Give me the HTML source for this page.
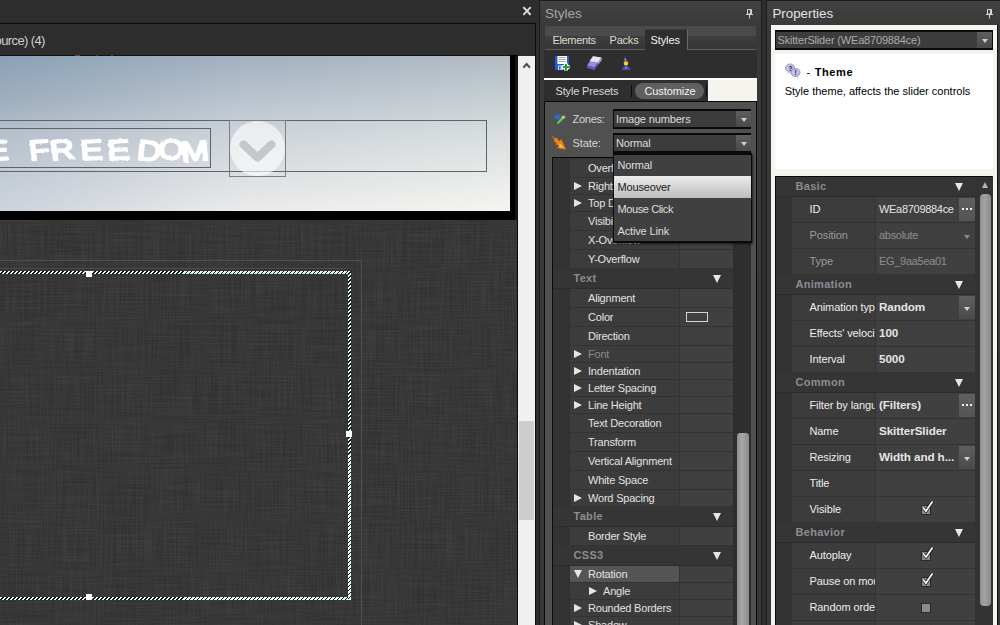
<!DOCTYPE html>
<html><head><meta charset="utf-8"><title>Styles and Properties</title>
<style>
*{box-sizing:border-box;margin:0;padding:0}
html,body{width:1000px;height:625px;overflow:hidden;background:#2d2d2d}
body{position:relative;font-family:"Liberation Sans",sans-serif;font-size:11px;color:#e0e0e0;}
.a{position:absolute}
.t{position:absolute;white-space:nowrap;line-height:14px;height:14px}
.b{font-weight:bold}
/* ---- left canvas ---- */
#canvas{left:0;top:220px;width:517px;height:405px;background:#2f2f2f;overflow:hidden}
.hatch{background:repeating-linear-gradient(135deg,#dffafa 0 2.05px,#151515 2.05px 2.83px);}
.handle{width:6px;height:6px;background:#fff}
/* ---- grids ---- */
.row{position:absolute;left:0;right:0;border-bottom:1px solid #333}
.sgrid .nm{position:absolute;left:16px;width:110px;top:0;bottom:0;background:#3c3c3c;border-left:1px solid #303030}
.sgrid .vl{position:absolute;left:126px;width:54px;top:0;bottom:0;background:#404040;border-left:1px solid #333}
.tri{position:absolute;width:0;height:0;border-style:solid}
.tr{border-width:4px 0 4px 8px;border-color:transparent transparent transparent #e6e6e6}
.td{border-width:8px 4px 0 4px;border-color:#e6e6e6 transparent transparent transparent}
.hd{color:#8c8c94;font-weight:bold;letter-spacing:.3px}
.pgrid .nm{position:absolute;left:15px;width:84px;top:0;bottom:0;background:#3c3c3c;border-left:1px solid #303030;overflow:hidden}
.pgrid .vl{position:absolute;left:99px;width:100px;top:0;bottom:0;background:#404040;border-left:1px solid #333}
.dd{position:absolute;background:linear-gradient(#5e5e5e,#4a4a4a);}
.dd i{position:absolute;left:50%;top:50%;margin:-1px 0 0 -3px;border-style:solid;border-width:4px 3px 0 3px;border-color:#d0d0d0 transparent transparent transparent}
.cb{position:absolute;width:10px;height:10px;background:#8a8a8a;border:1px solid #2a2a2a;left:45px;top:8px}
</style></head><body>
<!-- left document panel -->
<div class="a" style="left:0;top:0;width:536px;height:23px;background:#2d2d2d"></div>
<svg class="a" style="left:522px;top:6px" width="10" height="10" viewBox="0 0 10 10"><path d="M2 1.800 L8 8.200 M8 1.800 L2 8.200" stroke="#d6d6d6" stroke-width="2" stroke-linecap="square"/></svg>
<div class="a" style="left:0;top:23px;width:536px;height:1px;background:#0a0a0a"></div>
<div class="a" style="left:535px;top:23px;width:1px;height:602px;background:#0a0a0a"></div>
<div class="t" style="left:-5.500px;top:32.500px;font-size:13px;color:#cfcfcf;letter-spacing:-0.6px;line-height:15px;height:15px">ource) (4)</div>
<div class="a" style="left:0;top:55px;width:518px;height:165px;background:#000"></div>
<div class="a" style="left:515px;top:56px;width:3px;height:164px;background:#141414"></div>
<div class="a" style="left:0;top:55px;width:510px;height:1px;background:linear-gradient(90deg,#161208 0 75px,#8e400e 75px 80px,#161208 80px 96px,#6a3410 96px 98px,#161208 98px 111px,#7a3a0e 111px 113px,#161208 113px 100%)"></div>
<!-- sky image -->
<div class="a" id="sky" style="left:0;top:56px;width:510px;height:155px;overflow:hidden;background:linear-gradient(180deg,rgb(138,162,183) 0%,rgb(158,174,190) 28%,rgb(182,192,204) 50%,rgb(205,212,220) 100%)">
 <div class="a" style="inset:0;background:linear-gradient(180deg,rgb(163,177,193) 0%,rgb(205,211,217) 50%,rgb(235,235,235) 100%);-webkit-mask-image:linear-gradient(90deg,transparent 0,#000 250px,#000 510px);mask-image:linear-gradient(90deg,transparent 0,#000 250px,#000 510px)"></div>
 <div class="a" style="inset:0;background:linear-gradient(180deg,rgb(178,188,196) 0%,rgb(216,222,223) 50%,rgb(244,245,240) 100%);-webkit-mask-image:linear-gradient(90deg,transparent 250px,#000 510px);mask-image:linear-gradient(90deg,transparent 250px,#000 510px)"></div>
 <div class="a" style="left:-1px;top:64px;width:488px;height:52px;border:1px solid #5e6468"></div>
 <div class="a" style="left:-1px;top:72px;width:212px;height:40px;border:1px solid #5e6468"></div>
 <div class="a" style="left:229px;top:64px;width:57px;height:57px;border:1px solid #7a8084"></div>
 <div class="a" style="left:230px;top:65px;width:55px;height:55px;border-radius:50%;background:rgba(255,255,255,.62)"></div>
 <svg class="a" style="left:237px;top:79px" width="42" height="30" viewBox="0 0 42 30"><path d="M6.500 9.500 L20.500 22.500 L34.500 9.500" fill="none" stroke="#c3c8cc" stroke-width="8" stroke-linecap="round" stroke-linejoin="round"/></svg>
 <svg class="a" style="left:0;top:70px" width="214" height="46" viewBox="0 0 214 46">
  <defs><filter id="rough" x="-5%" y="-20%" width="110%" height="140%"><feTurbulence type="fractalNoise" baseFrequency="0.28" numOctaves="2" seed="7" result="n"/><feDisplacementMap in="SourceGraphic" in2="n" scale="2.600"/></filter></defs>
  <g filter="url(#rough)" fill="#fff" stroke="#fff" stroke-width="2" stroke-linejoin="round" font-family="'Liberation Sans',sans-serif" font-size="28">
   <text transform="translate(-14 34.500) scale(1.25 1) rotate(-3)">E</text>
   <text transform="translate(30 34.500) scale(1.2 1)" x="0 18 42.500 65 88.500 106.500 126.500" y="0 0 -0.500 -0.500 -1 -2 1" rotate="-5 -7 -3 -3 5 3 -4">FREEDOM</text>
  </g>
 </svg>
</div>
<!-- editor canvas -->
<div class="a" id="canvas"><svg width="517" height="406" style="display:block">
 <defs>
  <filter id="lv" x="0" y="0" width="100%" height="100%"><feTurbulence type="fractalNoise" baseFrequency="0.85 0.02" numOctaves="2" seed="5"/><feColorMatrix type="matrix" values="0 0 0 0 1  0 0 0 0 1  0 0 0 0 1  0.085 0 0 0 -0.022"/></filter>
  <filter id="lh" x="0" y="0" width="100%" height="100%"><feTurbulence type="fractalNoise" baseFrequency="0.02 0.85" numOctaves="2" seed="11"/><feColorMatrix type="matrix" values="0 0 0 0 1  0 0 0 0 1  0 0 0 0 1  0.085 0 0 0 -0.022"/></filter>
 </defs>
 <rect width="517" height="406" filter="url(#lv)"/><rect width="517" height="406" filter="url(#lh)"/>
</svg></div>
<div class="a" style="left:517px;top:220px;width:1px;height:405px;background:#0a0a0a"></div>
<div class="a" style="left:0;top:260px;width:362px;height:1px;background:#4f4f4f"></div>
<div class="a" style="left:361px;top:260px;width:1px;height:365px;background:#4f4f4f"></div>
<div class="a" style="left:0;top:268px;width:348px;height:1px;background:#4a4a4a"></div>
<div class="a hatch" style="left:0;top:271px;width:351px;height:3px"></div>
<div class="a hatch" style="left:0;top:597px;width:351px;height:3px"></div>
<div class="a hatch" style="left:348px;top:271px;width:3px;height:329px"></div>
<div class="a handle" style="left:86px;top:271px"></div>
<div class="a handle" style="left:346px;top:431px"></div>
<div class="a handle" style="left:86px;top:594px"></div>
<!-- vertical scrollbar -->
<div class="a" style="left:518px;top:56px;width:17px;height:569px;background:#f0f0f0"></div>
<svg class="a" style="left:522px;top:60px" width="10" height="10" viewBox="0 0 10 10"><path d="M1.300 7.600 L4.600 4 L7.900 7.600" fill="none" stroke="#4a4a4a" stroke-width="2"/></svg>
<div class="a" style="left:519px;top:421px;width:15px;height:99px;background:#cdcdcd"></div>
<!-- Styles panel -->
<div class="a" style="left:539px;top:0;width:223px;height:625px;background:linear-gradient(#424242 0,#393939 26px,#383838 100%);border:1px solid #1c1c1c;border-bottom:0"></div>
<div class="t" style="left:545px;top:6px;font-size:13.5px;color:#a6a6a6;line-height:16px;height:16px">Styles</div>
<svg class="a" style="left:746px;top:9px" width="7" height="10" viewBox="0 0 7 10"><path d="M1.500 0.500h4v4.500h-4z M0 5.500h7 M3.500 5.500v4" fill="none" stroke="#d0d0d0" stroke-width="1"/><path d="M4.500 1v4" stroke="#d0d0d0" stroke-width="1"/></svg>
<div class="a" style="left:545px;top:26px;width:211px;height:24px;background:linear-gradient(#4b4b4b 0,#4b4b4b 10px,#3e3e3e 10px,#363636 23px);border-bottom:1px solid #5c5c5c"></div>
<div class="a" style="left:645px;top:29px;width:43px;height:21px;background:#2e2e2e;border-right:1px solid #6a6a6a;border-top:1px solid #3a3a3a"></div>
<div class="t" style="left:552.5px;top:33px;color:#dcdccf;letter-spacing:-.35px">Elements</div>
<div class="t" style="left:609.5px;top:33px;color:#dcdccf;letter-spacing:-.2px">Packs</div>
<div class="t" style="left:650.5px;top:33px;color:#f4f4f4;letter-spacing:-.1px">Styles</div>
<div class="a" style="left:544px;top:50px;width:213px;height:28px;background:#2e2e2e"></div>
<svg class="a" style="left:555px;top:56px" width="15" height="15" viewBox="0 0 15 15">
 <rect x="0" y="0" width="14" height="14" rx="1" fill="#1c5fd2"/><rect x="2.500" y="0" width="9.500" height="8" fill="#fbfbfb"/>
 <path d="M4 1.500h6.500M4 3.500h6.500M4 5.500h6.500" stroke="#9a9a9a" stroke-width=".9"/><rect x="3" y="9.5" width="5" height="4.5" fill="#cfd8ea"/><rect x="4" y="10.5" width="1.5" height="3" fill="#1c5fd2"/>
 <path d="M11 7.5v7M7.5 11h7" stroke="#fff" stroke-width="4"/><path d="M11 8v6M8 11h6" stroke="#18a818" stroke-width="2"/></svg>
<svg class="a" style="left:586px;top:56px" width="17" height="15" viewBox="0 0 17 15">
 <path d="M7 0.300 L15.400 1.400 L8.500 11.500 L1.100 9.600 Z" fill="#8e8ef2"/><path d="M7 0.300 L15.400 1.400 L12.100 6.400 L3.700 5 Z" fill="#e6e6e6"/><path d="M1.100 9.600 L8.500 11.500 L15.400 1.400 L15.800 3.700 L8.300 14 L1.100 12 Z" fill="#6060b4"/><path d="M12.100 6.400 L15.400 1.400 L15.800 3.700 L12.400 8.400 Z" fill="#a8a8a8"/></svg>
<svg class="a" style="left:621px;top:55px" width="11" height="16" viewBox="0 0 11 16">
 <path d="M3.500 1 L7.500 8 L2.500 8 Z" fill="#4a4ab8"/><circle cx="5" cy="8.500" r="2.200" fill="#f4d020"/><path d="M1 15 Q1.500 10.500 5 10.500 Q8.500 10.500 9.500 15 Z" fill="#4a4ab8"/><circle cx="4.500" cy="4.500" r=".7" fill="#f4e040"/><circle cx="5" cy="13" r=".7" fill="#f4e040"/></svg>
<div class="a" style="left:544px;top:78px;width:213px;height:23px;background:#f6f4ef"></div>
<div class="a" style="left:544px;top:78px;width:213px;height:2px;background:#fff"></div>
<div class="a" style="left:544px;top:80px;width:164px;height:21px;background:#2e2e2e"></div>
<div class="t" style="left:555.5px;top:84px;color:#d8d8d8;letter-spacing:-.15px">Style Presets</div>
<div class="a" style="left:631px;top:85px;width:1px;height:12px;background:#0c0c0c"></div>
<div class="a" style="left:635px;top:83px;width:69px;height:16px;border-radius:8px;background:#606060"></div>
<div class="t" style="left:644.5px;top:84px;color:#f2f2f2;letter-spacing:-.1px">Customize</div>
<div class="a" style="left:706px;top:85px;width:1px;height:12px;background:#0c0c0c"></div>
<!-- form -->
<div class="a" style="left:544px;top:101px;width:213px;height:524px;background:#505050;border:1px solid #0a0a0a;border-bottom:0"></div>
<svg class="a" style="left:554px;top:114px" width="13" height="11" viewBox="0 0 13 11"><path d="M0.500 1 L7 0.500 L5 5.500 L1 5 Z" fill="#2a6ae0"/><path d="M9.500 1 L12 2.500 L5 9.500 L2.800 10.300 L3.500 8 Z" fill="#58d040"/><path d="M9.500 1 L12 2.500 L10.800 3.700 L8.300 2.200 Z" fill="#e06a20"/><path d="M8.300 2.200 L10.800 3.700 L10 4.500 L7.500 3 Z" fill="#f4f4f4"/></svg>
<div class="t" style="left:572.5px;top:112px;color:#d6d6d6;letter-spacing:-.25px">Zones:</div>
<svg class="a" style="left:551px;top:135px" width="16" height="15" viewBox="0 0 16 15"><path d="M0.500 0.500 L4 3.500 L5.500 2.500 L8 6 L10.500 4.500 L15 14.500 L6 13 L8 10.500 L4.500 9.500 L5.500 7.500 L2.500 6.500 L3.500 5 Z" fill="#f08010"/><path d="M8.500 8 L13 13 L8.500 12 Z" fill="#ffc840"/></svg>
<div class="t" style="left:572.5px;top:136px;color:#d6d6d6;letter-spacing:-.1px">State:</div>
<div class="a" style="left:613px;top:109px;width:138px;height:20px;background:#3c3c3c;border:1px solid #0a0a0a;border-top-width:2px;border-bottom-width:2px"></div>
<div class="dd" style="left:736px;top:111px;width:15px;height:16px"><i></i></div>
<div class="t" style="left:616px;top:112px;color:#dcdcdc;letter-spacing:-.15px">Image numbers</div>
<div class="a" style="left:613px;top:133px;width:138px;height:20px;background:#3c3c3c;border:1px solid #0a0a0a;border-top-width:2px;border-bottom-width:2px"></div>
<div class="dd" style="left:736px;top:135px;width:15px;height:16px"><i></i></div>
<div class="t" style="left:616px;top:136px;color:#dcdcdc;letter-spacing:-.15px">Normal</div>
<div class="a sgrid" style="left:552px;top:157px;width:199px;height:468px;background:#333;border-left:1px solid #0a0a0a;border-top:1px solid #0a0a0a;overflow:hidden">
<div class="row" style="top:1px;height:19px;width:180px"><div class="nm"></div><div class="vl"></div><span class="t" style="left:35px;top:2px;color:#e2e2e2;letter-spacing:-.2px">Overflow</span></div>
<div class="row" style="top:20px;height:17px;width:180px"><div class="nm"></div><div class="vl"></div><i class="tri tr" style="left:21px;top:4px"></i><span class="t" style="left:35px;top:1px;color:#e2e2e2;letter-spacing:-.2px">Right Distance</span></div>
<div class="row" style="top:37px;height:17px;width:180px"><div class="nm"></div><div class="vl"></div><i class="tri tr" style="left:21px;top:4px"></i><span class="t" style="left:35px;top:1px;color:#e2e2e2;letter-spacing:-.2px">Top Distance</span></div>
<div class="row" style="top:54px;height:19px;width:180px"><div class="nm"></div><div class="vl"></div><span class="t" style="left:35px;top:2px;color:#e2e2e2;letter-spacing:-.2px">Visibility</span></div>
<div class="row" style="top:73px;height:19px;width:180px"><div class="nm"></div><div class="vl"></div><span class="t" style="left:35px;top:2px;color:#e2e2e2;letter-spacing:-.2px">X-Overflow</span></div>
<div class="row" style="top:92px;height:19px;width:180px"><div class="nm"></div><div class="vl"></div><span class="t" style="left:35px;top:2px;color:#e2e2e2;letter-spacing:-.2px">Y-Overflow</span></div>
<div class="row" style="top:111px;height:20px;width:180px;background:#353535;border-bottom-color:#2c2c2c"><span class="t hd" style="left:20.500px;top:2px">Text</span><i class="tri td" style="left:160px;top:6px"></i></div>
<div class="row" style="top:131px;height:19px;width:180px"><div class="nm"></div><div class="vl"></div><span class="t" style="left:35px;top:2px;color:#e2e2e2;letter-spacing:-.2px">Alignment</span></div>
<div class="row" style="top:150px;height:19px;width:180px"><div class="nm"></div><div class="vl"></div><span class="t" style="left:35px;top:2px;color:#e2e2e2;letter-spacing:-.2px">Color</span><span class="a" style="left:133px;top:4px;width:22px;height:10px;border:1px solid #d4d4d4"></span></div>
<div class="row" style="top:169px;height:19px;width:180px"><div class="nm"></div><div class="vl"></div><span class="t" style="left:35px;top:2px;color:#e2e2e2;letter-spacing:-.2px">Direction</span></div>
<div class="row" style="top:188px;height:17px;width:180px"><div class="nm"></div><div class="vl"></div><i class="tri tr" style="left:21px;top:4px"></i><span class="t" style="left:35px;top:1px;color:#8a8a8a;letter-spacing:-.2px">Font</span></div>
<div class="row" style="top:205px;height:17px;width:180px"><div class="nm"></div><div class="vl"></div><i class="tri tr" style="left:21px;top:4px"></i><span class="t" style="left:35px;top:1px;color:#e2e2e2;letter-spacing:-.2px">Indentation</span></div>
<div class="row" style="top:222px;height:17px;width:180px"><div class="nm"></div><div class="vl"></div><i class="tri tr" style="left:21px;top:4px"></i><span class="t" style="left:35px;top:1px;color:#e2e2e2;letter-spacing:-.2px">Letter Spacing</span></div>
<div class="row" style="top:239px;height:17px;width:180px"><div class="nm"></div><div class="vl"></div><i class="tri tr" style="left:21px;top:4px"></i><span class="t" style="left:35px;top:1px;color:#e2e2e2;letter-spacing:-.2px">Line Height</span></div>
<div class="row" style="top:256px;height:19px;width:180px"><div class="nm"></div><div class="vl"></div><span class="t" style="left:35px;top:2px;color:#e2e2e2;letter-spacing:-.2px">Text Decoration</span></div>
<div class="row" style="top:275px;height:19px;width:180px"><div class="nm"></div><div class="vl"></div><span class="t" style="left:35px;top:2px;color:#e2e2e2;letter-spacing:-.2px">Transform</span></div>
<div class="row" style="top:294px;height:19px;width:180px"><div class="nm"></div><div class="vl"></div><span class="t" style="left:35px;top:2px;color:#e2e2e2;letter-spacing:-.2px">Vertical Alignment</span></div>
<div class="row" style="top:313px;height:19px;width:180px"><div class="nm"></div><div class="vl"></div><span class="t" style="left:35px;top:2px;color:#e2e2e2;letter-spacing:-.2px">White Space</span></div>
<div class="row" style="top:332px;height:17px;width:180px"><div class="nm"></div><div class="vl"></div><i class="tri tr" style="left:21px;top:4px"></i><span class="t" style="left:35px;top:1px;color:#e2e2e2;letter-spacing:-.2px">Word Spacing</span></div>
<div class="row" style="top:349px;height:20px;width:180px;background:#353535;border-bottom-color:#2c2c2c"><span class="t hd" style="left:20.500px;top:2px">Table</span><i class="tri td" style="left:160px;top:6px"></i></div>
<div class="row" style="top:369px;height:19px;width:180px"><div class="nm"></div><div class="vl"></div><span class="t" style="left:35px;top:2px;color:#e2e2e2;letter-spacing:-.2px">Border Style</span></div>
<div class="row" style="top:388px;height:20px;width:180px;background:#353535;border-bottom-color:#2c2c2c"><span class="t hd" style="left:20.500px;top:2px">CSS3</span><i class="tri td" style="left:160px;top:6px"></i></div>
<div class="row" style="top:408px;height:17px;width:180px"><div class="nm" style="background:#555"></div><div class="vl"></div><i class="tri td" style="left:21px;top:4px"></i><span class="t" style="left:35px;top:1px;color:#e2e2e2;letter-spacing:-.2px">Rotation</span></div>
<div class="row" style="top:425px;height:17px;width:180px"><div class="nm"></div><div class="vl"></div><i class="tri tr" style="left:36px;top:4px"></i><span class="t" style="left:50px;top:1px;color:#e2e2e2;letter-spacing:-.2px">Angle</span></div>
<div class="row" style="top:442px;height:17px;width:180px"><div class="nm"></div><div class="vl"></div><i class="tri tr" style="left:21px;top:4px"></i><span class="t" style="left:35px;top:1px;color:#e2e2e2;letter-spacing:-.2px">Rounded Borders</span></div>
<div class="row" style="top:459px;height:17px;width:180px"><div class="nm"></div><div class="vl"></div><i class="tri tr" style="left:21px;top:4px"></i><span class="t" style="left:35px;top:1px;color:#e2e2e2;letter-spacing:-.2px">Shadow</span></div>
<div class="a" style="left:180px;top:0;width:19px;height:468px;background:#2e2e2e"></div>
<div class="a" style="left:184px;top:275px;width:12px;height:200px;border-radius:3px;background:linear-gradient(90deg,#8e8e8e,#a8a8a8 40%,#8a8a8a)"></div>
</div>
<div class="a" style="left:613px;top:153px;width:139px;height:90px;background:#404040;border:1px solid #0a0a0a;border-top-width:2px;border-bottom-width:2px;box-shadow:1px 1px 2px rgba(0,0,0,.6)"></div>
<div class="a" style="left:614px;top:176px;width:137px;height:22px;background:linear-gradient(#ececec,#bdbdbd)"></div>
<div class="t" style="left:617.5px;top:158px;color:#dedede;letter-spacing:-.15px">Normal</div>
<div class="t" style="left:617.5px;top:180px;color:#1a1a1a;letter-spacing:-.15px">Mouseover</div>
<div class="t" style="left:617.5px;top:202px;color:#dedede;letter-spacing:-.4px">Mouse Click</div>
<div class="t" style="left:617.5px;top:224px;color:#dedede;letter-spacing:-.15px">Active Link</div>
<!-- Properties panel -->
<div class="a" style="left:766px;top:0;width:236px;height:625px;background:linear-gradient(#424242 0,#393939 26px,#383838 100%);border:1px solid #1c1c1c;border-bottom:0"></div>
<div class="t" style="left:772.5px;top:6px;font-size:13.3px;color:#e2e2e2;line-height:16px;height:16px">Properties</div>
<svg class="a" style="left:986px;top:9px" width="7" height="10" viewBox="0 0 7 10"><path d="M1.500 0.500h4v4.500h-4z M0 5.500h7 M3.500 5.500v4" fill="none" stroke="#d8d8d8" stroke-width="1"/><path d="M4.500 1v4" stroke="#d8d8d8" stroke-width="1"/></svg>
<div class="a" style="left:771px;top:25px;width:226px;height:600px;background:#f6f4ef"></div>
<div class="a" style="left:997px;top:25px;width:1px;height:600px;background:#111"></div>
<div class="a" style="left:775px;top:30px;width:218px;height:20px;background:#3c3c3c;border:1px solid #0a0a0a;border-top-width:2px;border-bottom-width:2px"></div>
<div class="dd" style="left:977px;top:32px;width:15px;height:16px"><i></i></div>
<div class="t" style="left:777.5px;top:33px;color:#ababab;letter-spacing:-.18px">SkitterSlider (WEa8709884ce)</div>
<div class="a" style="left:775px;top:54px;width:218px;height:115px;background:#fff"></div>
<svg class="a" style="left:785px;top:63px" width="16" height="16" viewBox="0 0 16 16"><ellipse cx="5" cy="5" rx="4.500" ry="4" fill="#c4c4ee" stroke="#8888b8" stroke-width=".8"/><path d="M3 8.500 L2.500 11 L5.500 8.800Z" fill="#c4c4ee"/><ellipse cx="10.500" cy="9.500" rx="4.500" ry="4" fill="#c4c4ee" stroke="#7e7eaa" stroke-width=".8"/><path d="M11 13 L13 15.500 L13 12.500Z" fill="#b0b0d8"/><text x="3.200" y="7.500" font-size="7" font-weight="bold" fill="#222" font-family="Liberation Sans,sans-serif">?</text><text x="9.500" y="12" font-size="7" font-weight="bold" fill="#222" font-family="Liberation Sans,sans-serif">!</text></svg>
<div class="t" style="left:806.500px;top:64.700px;color:#000">- <b style="margin-left:1.500px;letter-spacing:.6px">Theme</b></div>
<div class="t" style="left:784.700px;top:83.700px;color:#000">Style theme, affects the slider controls</div>
<div class="a pgrid" style="left:775px;top:176px;width:218px;height:449px;background:#333;border:1px solid #0a0a0a;border-bottom:0;border-right-color:#333;overflow:hidden">
<div class="row" style="top:0px;height:20px;width:199px;background:#353535;border-bottom-color:#2c2c2c"><span class="t hd" style="left:19.500px;top:2px">Basic</span><i class="tri td" style="left:178.500px;top:6px"></i></div>
<div class="row" style="top:20px;height:26px;width:199px"><div class="nm"><span class="t" style="left:17.500px;top:5px;color:#ececec;letter-spacing:-.1px">ID</span></div><div class="vl"><span class="t" style="left:3px;top:5px;color:#e4e4e4;letter-spacing:-.3px">WEa8709884ce</span></div><span class="a" style="left:183px;top:1px;width:16px;height:23px;background:linear-gradient(#606060,#545454)"></span><span class="a" style="left:186px;top:11px;width:2px;height:2px;background:#f0f0f0;box-shadow:4px 0 #f0f0f0,8px 0 #f0f0f0"></span></div>
<div class="row" style="top:46px;height:26px;width:199px"><div class="nm"><span class="t" style="left:17.500px;top:5px;color:#9a9a9a;letter-spacing:-.1px">Position</span></div><div class="vl"><span class="t" style="left:3px;top:5px;color:#8e8e8e;letter-spacing:-.3px">absolute</span></div><span class="dd" style="left:183px;top:1px;width:16px;height:23px;background:none"><i style="border-top-color:#8a8a8a"></i></span></div>
<div class="row" style="top:72px;height:26px;width:199px"><div class="nm"><span class="t" style="left:17.500px;top:5px;color:#9a9a9a;letter-spacing:-.1px">Type</span></div><div class="vl"><span class="t" style="left:3px;top:5px;color:#8e8e8e;letter-spacing:-.3px">EG_9aa5ea01</span></div></div>
<div class="row" style="top:98px;height:20px;width:199px;background:#353535;border-bottom-color:#2c2c2c"><span class="t hd" style="left:19.500px;top:2px">Animation</span><i class="tri td" style="left:178.500px;top:6px"></i></div>
<div class="row" style="top:118px;height:26px;width:199px"><div class="nm"><span class="t" style="left:17.500px;top:5px;color:#ececec;letter-spacing:-.1px">Animation type</span></div><div class="vl"><span class="t b" style="left:3px;top:5px;color:#e4e4e4;font-size:11.700px;letter-spacing:-.1px">Random</span></div><span class="dd" style="left:183px;top:1px;width:16px;height:23px"><i></i></span></div>
<div class="row" style="top:144px;height:26px;width:199px"><div class="nm"><span class="t" style="left:17.500px;top:5px;color:#ececec;letter-spacing:-.1px">Effects' velocity</span></div><div class="vl"><span class="t b" style="left:3px;top:5px;color:#e4e4e4;font-size:11.700px;letter-spacing:-.1px">100</span></div></div>
<div class="row" style="top:170px;height:26px;width:199px"><div class="nm"><span class="t" style="left:17.500px;top:5px;color:#ececec;letter-spacing:-.1px">Interval</span></div><div class="vl"><span class="t b" style="left:3px;top:5px;color:#e4e4e4;font-size:11.700px;letter-spacing:-.1px">5000</span></div></div>
<div class="row" style="top:196px;height:20px;width:199px;background:#353535;border-bottom-color:#2c2c2c"><span class="t hd" style="left:19.500px;top:2px">Common</span><i class="tri td" style="left:178.500px;top:6px"></i></div>
<div class="row" style="top:216px;height:26px;width:199px"><div class="nm"><span class="t" style="left:17.500px;top:5px;color:#ececec;letter-spacing:-.1px">Filter by language</span></div><div class="vl"><span class="t b" style="left:3px;top:5px;color:#e4e4e4;font-size:11.700px;letter-spacing:-.1px">(Filters)</span></div><span class="a" style="left:183px;top:1px;width:16px;height:23px;background:linear-gradient(#606060,#545454)"></span><span class="a" style="left:186px;top:11px;width:2px;height:2px;background:#f0f0f0;box-shadow:4px 0 #f0f0f0,8px 0 #f0f0f0"></span></div>
<div class="row" style="top:242px;height:26px;width:199px"><div class="nm"><span class="t" style="left:17.500px;top:5px;color:#ececec;letter-spacing:-.1px">Name</span></div><div class="vl"><span class="t b" style="left:3px;top:5px;color:#e4e4e4;font-size:11.700px;letter-spacing:-.1px">SkitterSlider</span></div></div>
<div class="row" style="top:268px;height:26px;width:199px"><div class="nm"><span class="t" style="left:17.500px;top:5px;color:#ececec;letter-spacing:-.1px">Resizing</span></div><div class="vl"><span class="t b" style="left:3px;top:5px;color:#e4e4e4;font-size:11.700px;letter-spacing:-.1px">Width and h...</span></div><span class="dd" style="left:183px;top:1px;width:16px;height:23px"><i></i></span></div>
<div class="row" style="top:294px;height:26px;width:199px"><div class="nm"><span class="t" style="left:17.500px;top:5px;color:#ececec;letter-spacing:-.1px">Title</span></div><div class="vl"><span class="t" style="left:3px;top:5px;color:#e4e4e4;letter-spacing:-.3px"></span></div></div>
<div class="row" style="top:320px;height:26px;width:199px"><div class="nm"><span class="t" style="left:17.500px;top:5px;color:#ececec;letter-spacing:-.1px">Visible</span></div><div class="vl"><span class="t" style="left:3px;top:5px;color:#e4e4e4;letter-spacing:-.3px"></span></div><span class="cb" style="left:145px"></span><svg class="a" style="left:144px;top:3px" width="15" height="14" viewBox="0 0 15 14"><path d="M3 7.500 L6 11 L12.500 1.500" fill="none" stroke="#1a1a1a" stroke-width="3.200"/><path d="M3 7.500 L6 11 L12.500 1.500" fill="none" stroke="#fff" stroke-width="1.700"/></svg></div>
<div class="row" style="top:346px;height:20px;width:199px;background:#353535;border-bottom-color:#2c2c2c"><span class="t hd" style="left:19.500px;top:2px">Behavior</span><i class="tri td" style="left:178.500px;top:6px"></i></div>
<div class="row" style="top:366px;height:26px;width:199px"><div class="nm"><span class="t" style="left:17.500px;top:5px;color:#ececec;letter-spacing:-.1px">Autoplay</span></div><div class="vl"><span class="t" style="left:3px;top:5px;color:#e4e4e4;letter-spacing:-.3px"></span></div><span class="cb" style="left:145px"></span><svg class="a" style="left:144px;top:3px" width="15" height="14" viewBox="0 0 15 14"><path d="M3 7.500 L6 11 L12.500 1.500" fill="none" stroke="#1a1a1a" stroke-width="3.200"/><path d="M3 7.500 L6 11 L12.500 1.500" fill="none" stroke="#fff" stroke-width="1.700"/></svg></div>
<div class="row" style="top:392px;height:26px;width:199px"><div class="nm"><span class="t" style="left:17.500px;top:5px;color:#ececec;letter-spacing:-.1px">Pause on mouse over</span></div><div class="vl"><span class="t" style="left:3px;top:5px;color:#e4e4e4;letter-spacing:-.3px"></span></div><span class="cb" style="left:145px"></span><svg class="a" style="left:144px;top:3px" width="15" height="14" viewBox="0 0 15 14"><path d="M3 7.500 L6 11 L12.500 1.500" fill="none" stroke="#1a1a1a" stroke-width="3.200"/><path d="M3 7.500 L6 11 L12.500 1.500" fill="none" stroke="#fff" stroke-width="1.700"/></svg></div>
<div class="row" style="top:418px;height:26px;width:199px"><div class="nm"><span class="t" style="left:17.500px;top:5px;color:#ececec;letter-spacing:-.1px">Random order</span></div><div class="vl"><span class="t" style="left:3px;top:5px;color:#e4e4e4;letter-spacing:-.3px"></span></div><span class="cb" style="left:145px"></span></div>
<div class="row" style="top:444px;height:26px;width:199px"><div class="nm"><span class="t" style="left:17.500px;top:5px;color:#ececec;letter-spacing:-.1px">Show labels</span></div><div class="vl"><span class="t" style="left:3px;top:5px;color:#e4e4e4;letter-spacing:-.3px"></span></div><span class="cb" style="left:145px"></span><svg class="a" style="left:144px;top:3px" width="15" height="14" viewBox="0 0 15 14"><path d="M3 7.500 L6 11 L12.500 1.500" fill="none" stroke="#1a1a1a" stroke-width="3.200"/><path d="M3 7.500 L6 11 L12.500 1.500" fill="none" stroke="#fff" stroke-width="1.700"/></svg></div>
<div class="a" style="left:199px;top:0;width:18px;height:449px;background:#333"></div>
<i class="tri" style="left:205.500px;top:5px;border-style:solid;border-width:0 3.500px 6px 3.500px;border-color:transparent transparent #b4b4b4 transparent"></i>
<div class="a" style="left:204px;top:17px;width:11px;height:412px;border-radius:4px;background:linear-gradient(90deg,#8e8e8e,#a4a4a4 40%,#8a8a8a)"></div>
</div>
</body></html>
